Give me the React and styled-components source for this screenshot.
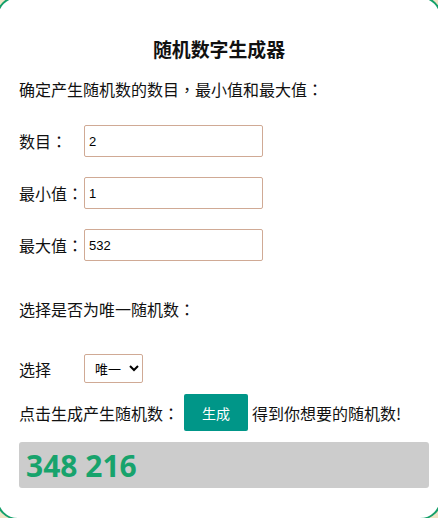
import React, { useState } from "react";
import styled, { createGlobalStyle } from "styled-components";

const Global = createGlobalStyle`
  html, body { margin: 0; padding: 0; }
  body {
    background: #efe4c6;
    font-family: "Noto Sans CJK SC", "Noto Sans", sans-serif;
    color: #111;
    overflow: hidden;
  }
`;

const Card = styled.div`
  margin: -4px -4px 0 -4px;
  height: 524px;
  box-sizing: border-box;
  background: #fff;
  border: 2px solid #14a06a;
  border-radius: 22px;
  padding: 39px 21px 0 21px;
`;

const Title = styled.h3`
  margin: 0;
  font-size: 18.9px;
  font-weight: 700;
  line-height: 24px;
  text-align: center;
  padding-left: 0;
`;

const Text = styled.p`
  margin: ${(p) => p.$mt || 0}px 0 0 0;
  font-size: 16px;
  line-height: 24px;
`;

const Punct = styled.span`
  font-family: "Noto Sans CJK TC", "Noto Sans CJK SC", sans-serif;
`;

const Row = styled.div`
  display: grid;
  grid-template-columns: 65px auto;
  align-items: center;
  justify-content: start;
  margin-top: ${(p) => p.$mt}px;
  font-size: 16px;
  line-height: 24px;
`;

const Input = styled.input`
  box-sizing: border-box;
  width: 179px;
  height: 32px;
  border: 1px solid #d0aa95;
  border-radius: 2px;
  padding: 0 4px;
  font-family: "Liberation Sans", Arial, sans-serif;
  font-size: 13px;
  color: #000;
  outline: none;
`;

const Select = styled.select`
  box-sizing: border-box;
  width: 59px;
  height: 29px;
  border: 1px solid #d0aa95;
  border-radius: 2px;
  background: #fff;
  padding: 0 2px 0 6px;
  font-family: "Noto Sans CJK SC", sans-serif;
  font-size: 13px;
  color: #000;
`;

const GenRow = styled.div`
  display: flex;
  align-items: center;
  margin-top: 11px;
  font-size: 16px;
  line-height: 24px;
`;

const Button = styled.button`
  width: 64px;
  height: 37px;
  margin: 0 4px 0 5px;
  border: none;
  border-radius: 2px;
  background: #009688;
  color: #fff;
  font-family: "Noto Sans CJK SC", sans-serif;
  font-size: 14px;
  cursor: pointer;
`;

const Result = styled.div`
  box-sizing: border-box;
  width: 410px;
  height: 46px;
  margin-top: 11px;
  background: #cccccc;
  border-radius: 3px;
  padding-left: 7px;
  display: flex;
  align-items: center;
  font-family: "Open Sans", "Noto Sans", sans-serif;
  font-weight: 700;
  font-size: 30px;
  color: #17a36c;
`;

export default function App() {
  const [count, setCount] = useState("2");
  const [min, setMin] = useState("1");
  const [max, setMax] = useState("532");
  const [unique, setUnique] = useState("unique");
  const [result, setResult] = useState("348 216");

  const generate = () => {
    const n = parseInt(count, 10) || 1;
    const lo = parseInt(min, 10) || 0;
    const hi = parseInt(max, 10) || 0;
    const out = [];
    let guard = 0;
    while (out.length < n && guard < 10000) {
      guard++;
      const v = lo + Math.floor(Math.random() * (hi - lo + 1));
      if (unique === "unique" && out.includes(v)) continue;
      out.push(v);
    }
    setResult(out.join(" "));
  };

  return (
    <>
      <Global />
      <Card>
        <Title>随机数字生成器</Title>
        <Text $mt={16}>
          确定产生随机数的数目<Punct>，</Punct>最小值和最大值<Punct>：</Punct>
        </Text>
        <Row $mt={24}>
          <span>数目<Punct>：</Punct></span>
          <Input value={count} onChange={(e) => setCount(e.target.value)} />
        </Row>
        <Row $mt={20}>
          <span>最小值<Punct>：</Punct></span>
          <Input value={min} onChange={(e) => setMin(e.target.value)} />
        </Row>
        <Row $mt={20}>
          <span>最大值<Punct>：</Punct></span>
          <Input value={max} onChange={(e) => setMax(e.target.value)} />
        </Row>
        <Text $mt={36}>
          选择是否为唯一随机数<Punct>：</Punct>
        </Text>
        <Row $mt={33}>
          <span>选择</span>
          <Select value={unique} onChange={(e) => setUnique(e.target.value)}>
            <option value="unique">唯一</option>
            <option value="repeat">重复</option>
          </Select>
        </Row>
        <GenRow>
          <span>点击生成产生随机数<Punct>：</Punct></span>
          <Button onClick={generate}>生成</Button>
          <span>得到你想要的随机数!</span>
        </GenRow>
        <Result>{result}</Result>
      </Card>
    </>
  );
}
